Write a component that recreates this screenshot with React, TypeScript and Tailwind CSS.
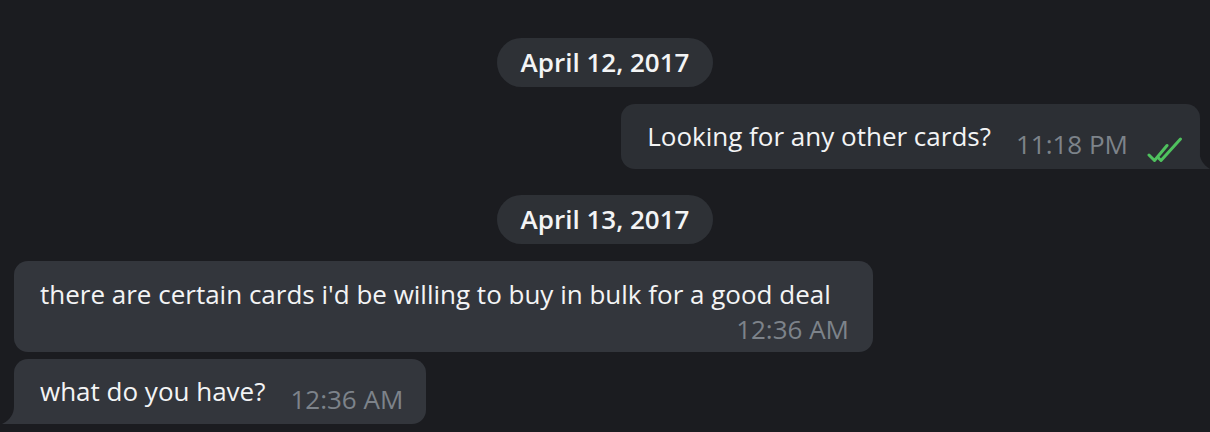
import React from 'react';

const FONT = { fontFamily: '"Open Sans", "Noto Sans", sans-serif' };

function DatePill({ label }: { label: string }) {
  return (
    <div className="flex justify-center">
      <div className="flex h-[49px] items-center rounded-full bg-[#2e3136] px-[24px] text-[26px] font-semibold text-[#f3f4f5]">
        {label}
      </div>
    </div>
  );
}

function DoubleCheck() {
  return (
    <svg width="36" height="30" viewBox="0 0 36 30" fill="none" stroke="#4fc15e" strokeWidth="3" strokeLinecap="round" strokeLinejoin="round">
      <path d="M2 21 L7.5 26.5 L20 11.5" />
      <path d="M11.5 24 L14 26.5 L33.5 5" />
    </svg>
  );
}

export default function App() {
  return (
    <div className="flex h-[432px] w-full flex-col overflow-hidden bg-[#1b1c20] pt-[38px]" style={FONT}>
      <DatePill label="April 12, 2017" />

      {/* outgoing */}
      <div className="mt-[17px] flex justify-end pr-[10px]">
        <div className="relative flex h-[65px] items-start rounded-[14px] rounded-br-none bg-[#2c2f34] pl-[26px] pr-[17px] pt-[17px]">
          <span className="text-[26px] leading-[30px] text-[#f3f4f5]">Looking for any other cards?</span>
          <span className="ml-[25px] mt-[8px] text-[26px] leading-[30px] text-[#7d838a]">11:18 PM</span>
          <span className="ml-[19px] mt-[13px]">
            <DoubleCheck />
          </span>
          <svg className="absolute bottom-0 right-[-10px]" width="11" height="20" viewBox="0 0 11 20">
            <path d="M0 0 C0 9 4 16 11 20 L0 20 Z" fill="#2c2f34" />
          </svg>
        </div>
      </div>

      <div className="mt-[26px]">
        <DatePill label="April 13, 2017" />
      </div>

      {/* incoming */}
      <div className="mt-[17px] flex pl-[14px]">
        <div className="flex h-[91px] w-[859px] flex-col rounded-[14px] bg-[#33363c] pl-[26px] pr-[24px] pt-[18px]">
          <span className="text-[26px] leading-[30px] text-[#f3f4f5]">
            there are certain cards i'd be willing to buy in bulk for a good deal
          </span>
          <span className="mt-[5px] self-end text-[26px] leading-[30px] text-[#7d838a]">12:36 AM</span>
        </div>
      </div>

      <div className="mt-[7px] flex pl-[14px]">
        <div className="relative flex h-[65px] items-start rounded-[14px] rounded-bl-none bg-[#33363c] pl-[26px] pr-[23px] pt-[17px]">
          <span className="text-[26px] leading-[30px] text-[#f3f4f5]">what do you have?</span>
          <span className="ml-[25px] mt-[8px] text-[26px] leading-[30px] text-[#7d838a]">12:36 AM</span>
          <svg className="absolute bottom-0 left-[-12px]" width="12" height="18" viewBox="0 0 12 18">
            <path d="M12 0 C12 8 8 14 0 18 L12 18 Z" fill="#33363c" />
          </svg>
        </div>
      </div>
    </div>
  );
}
